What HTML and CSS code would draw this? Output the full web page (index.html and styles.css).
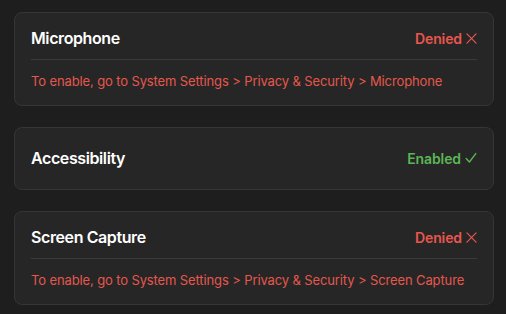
FILE: index.html
```html
<!DOCTYPE html>
<html>
<head>
<meta charset="utf-8">
<link rel="stylesheet" href="styles.css">
</head>
<body>
<div class="list">
  <section class="card">
    <div class="card-head">
      <span class="title">Microphone</span>
      <span class="status denied">Denied
        <svg class="icon" viewBox="0 0 12 12" width="11" height="11"><path d="M1 1 L11 11 M11 1 L1 11" stroke="currentColor" stroke-width="1.3" fill="none" stroke-linecap="round"/></svg>
      </span>
    </div>
    <div class="divider"></div>
    <p class="hint">To enable, go to System Settings &gt; Privacy &amp; Security &gt; Microphone</p>
  </section>
  <section class="card card--single">
    <div class="card-head">
      <span class="title">Accessibility</span>
      <span class="status enabled">Enabled
        <svg class="icon" viewBox="0 0 12 12" width="12" height="12"><path d="M1.2 6.6 L4.4 10 L10.8 1.6" stroke="currentColor" stroke-width="1.4" fill="none" stroke-linecap="round" stroke-linejoin="round"/></svg>
      </span>
    </div>
  </section>
  <section class="card">
    <div class="card-head">
      <span class="title">Screen Capture</span>
      <span class="status denied">Denied
        <svg class="icon" viewBox="0 0 12 12" width="11" height="11"><path d="M1 1 L11 11 M11 1 L1 11" stroke="currentColor" stroke-width="1.3" fill="none" stroke-linecap="round"/></svg>
      </span>
    </div>
    <div class="divider"></div>
    <p class="hint">To enable, go to System Settings &gt; Privacy &amp; Security &gt; Screen Capture</p>
  </section>
</div>
</body>
</html>
```
FILE: styles.css
```css
html, body {
  margin: 0;
  padding: 0;
  background: #1e1e1e;
}
body {
  font-family: Inter, "Noto Sans", sans-serif;
  -webkit-font-smoothing: antialiased;
}
.list {
  display: flex;
  flex-direction: column;
  gap: 21px;
  padding: 12px 12px 0 14px;
}
.card {
  background: #262626;
  border: 1px solid #353535;
  border-radius: 8px;
  padding: 14px 16px 16px;
}
.card--single {
  padding: 19px 16px 20px;
}
.card-head {
  display: flex;
  align-items: center;
  justify-content: space-between;
  height: 22px;
}
.title {
  color: #ffffff;
  font-size: 16px;
  font-weight: 600;
  letter-spacing: -0.4px;
}
.status {
  display: flex;
  align-items: center;
  gap: 4px;
  font-size: 14px;
  font-weight: 600;
  letter-spacing: -0.1px;
}
.denied { color: #e8574e; }
.enabled { color: #5cb555; }
.icon { display: block; }
.divider {
  height: 1px;
  background: #3a3a3a;
  margin-top: 10px;
}
.hint {
  margin: 13px 0 0;
  font-size: 13px;
  line-height: 16px;
  letter-spacing: -0.12px;
  color: #e5574d;
}
```
